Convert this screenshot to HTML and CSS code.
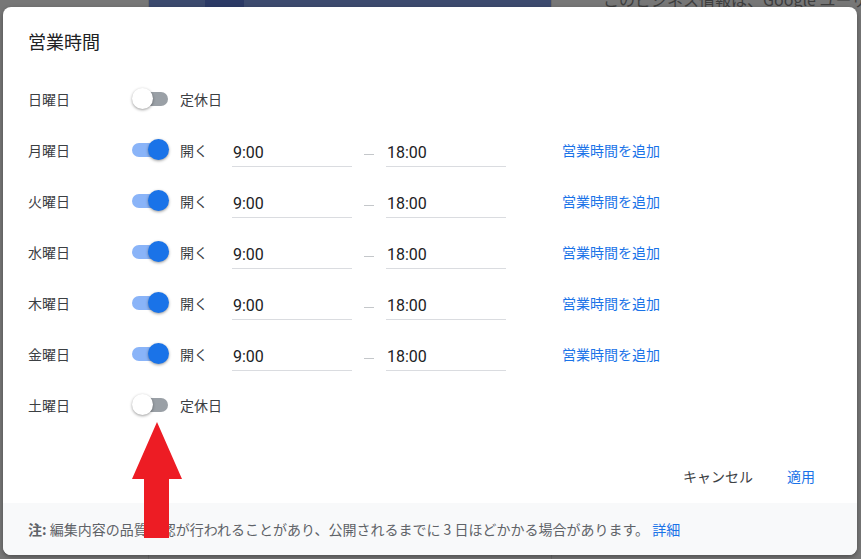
FILE: index.html
```html
<!DOCTYPE html>
<html lang="ja">
<head>
<meta charset="utf-8">
<title>営業時間</title>
<link rel="stylesheet" href="styles.css">
</head>
<body>
<div class="backdrop">
  <div class="bg-col"><span class="bg-seg-a"></span><span class="bg-seg-b"></span><span class="bg-seg-c"></span></div>
  <div class="bg-text">このビジネス情報は、Google ユーザ</div>
</div>

<div class="dialog">
  <h2 class="title">営業時間</h2>
  <div class="days">
    <div class="day">
      <span class="day-name">日曜日</span>
      <span class="switch"><span class="track"></span><span class="thumb"></span></span>
      <span class="state">定休日</span>
    </div>
    <div class="day">
      <span class="day-name">月曜日</span>
      <span class="switch on"><span class="track"></span><span class="thumb"></span></span>
      <span class="state">開く</span>
      <span class="time">9:00</span><span class="dash"><span></span></span><span class="time">18:00</span>
      <a class="add-link">営業時間を追加</a>
    </div>
    <div class="day">
      <span class="day-name">火曜日</span>
      <span class="switch on"><span class="track"></span><span class="thumb"></span></span>
      <span class="state">開く</span>
      <span class="time">9:00</span><span class="dash"><span></span></span><span class="time">18:00</span>
      <a class="add-link">営業時間を追加</a>
    </div>
    <div class="day">
      <span class="day-name">水曜日</span>
      <span class="switch on"><span class="track"></span><span class="thumb"></span></span>
      <span class="state">開く</span>
      <span class="time">9:00</span><span class="dash"><span></span></span><span class="time">18:00</span>
      <a class="add-link">営業時間を追加</a>
    </div>
    <div class="day">
      <span class="day-name">木曜日</span>
      <span class="switch on"><span class="track"></span><span class="thumb"></span></span>
      <span class="state">開く</span>
      <span class="time">9:00</span><span class="dash"><span></span></span><span class="time">18:00</span>
      <a class="add-link">営業時間を追加</a>
    </div>
    <div class="day">
      <span class="day-name">金曜日</span>
      <span class="switch on"><span class="track"></span><span class="thumb"></span></span>
      <span class="state">開く</span>
      <span class="time">9:00</span><span class="dash"><span></span></span><span class="time">18:00</span>
      <a class="add-link">営業時間を追加</a>
    </div>
    <div class="day">
      <span class="day-name">土曜日</span>
      <span class="switch"><span class="track"></span><span class="thumb"></span></span>
      <span class="state">定休日</span>
    </div>
  </div>
  <div class="actions">
    <button class="btn">キャンセル</button>
    <button class="btn primary">適用</button>
  </div>
  <div class="note"><b>注:</b>&nbsp;編集内容の品質確認が行われることがあり、公開されるまでに 3 日ほどかかる場合があります。 <a class="note-link">詳細</a></div>
</div>

<svg class="arrow" width="52" height="118" viewBox="0 0 52 118">
  <polygon points="25,0 50,57 37,57 37,116 12,116 12,57 0,57" fill="#ed1c24"/>
</svg>
</body>
</html>
```

FILE: styles.css
```css
* { box-sizing: border-box; }
html, body {
  margin: 0;
  padding: 0;
  width: 861px;
  height: 559px;
  overflow: hidden;
}
body {
  background: #777777;
  font-family: Roboto, "Noto Sans CJK JP", sans-serif;
  position: relative;
  padding: 7px 0 0 3px;
}
.backdrop {
  position: absolute;
  left: 0;
  top: 0;
  width: 861px;
  height: 559px;
}
.bg-col {
  position: absolute;
  left: 148px;
  top: 0;
  width: 404px;
  height: 559px;
  border-left: 1px solid #6a6a6a;
  border-right: 1px solid #6a6a6a;
  display: flex;
  align-items: flex-start;
}
.bg-col span { height: 7px; display: block; }
.bg-seg-a { width: 56px; background: #3c4a6e; }
.bg-seg-b { width: 39px; background: #2c3a66; }
.bg-seg-c { flex: 1; background: #3d4b6f; }
.bg-text {
  position: absolute;
  left: 603px;
  top: -12px;
  font-family: "Noto Sans CJK JP", sans-serif;
  font-size: 16px;
  line-height: 22px;
  color: #3e3e3e;
  white-space: nowrap;
}
.dialog {
  position: relative;
  width: 854px;
  height: 548px;
  background: #ffffff;
  border-radius: 8px;
  overflow: hidden;
  display: flex;
  flex-direction: column;
  box-shadow: 0 2px 5px rgba(0, 0, 0, 0.35);
}
.title {
  margin: 0;
  padding: 22px 0 0 25px;
  height: 55px;
  font-family: "Noto Sans CJK JP", sans-serif;
  font-size: 18px;
  line-height: 24px;
  font-weight: 400;
  color: #202124;
}
.days {
  margin-top: 11px;
  display: flex;
  flex-direction: column;
}
.day {
  height: 51px;
  padding-left: 25px;
  display: flex;
  align-items: center;
  font-family: "Noto Sans CJK JP", sans-serif;
  font-size: 14px;
  line-height: 20px;
  color: #3c4043;
}
.day-name { width: 104px; }
.switch {
  position: relative;
  width: 37px;
  height: 22px;
  margin-right: 11px;
}
.track {
  position: absolute;
  left: 2px;
  top: 4px;
  width: 34px;
  height: 14px;
  border-radius: 7px;
  background: #9aa0a6;
}
.thumb {
  position: absolute;
  left: 0;
  top: 0;
  width: 21px;
  height: 21px;
  border-radius: 50%;
  background: #ffffff;
  box-shadow: 0 1px 3px rgba(0, 0, 0, 0.4);
}
.switch.on .track { background: #8ab4f8; left: 0; width: 33px; }
.switch.on .thumb { left: 16px; background: #1a73e8; }
.state { width: 52px; }
.time {
  width: 120px;
  height: 32px;
  margin-top: 2px;
  border-bottom: 1px solid #dadce0;
  font-family: Roboto, sans-serif;
  font-size: 16px;
  line-height: 31px;
  padding-top: 2px;
  color: #202124;
  padding-left: 1px;
}
.dash {
  width: 34px;
  height: 32px;
  display: flex;
  justify-content: center;
  align-items: center;
  padding-top: 10px;
}
.dash span {
  display: block;
  width: 10px;
  height: 1px;
  background: #c4c7ca;
}
.add-link {
  margin-left: 56px;
  color: #1a73e8;
  cursor: pointer;
}
.actions {
  margin-top: auto;
  margin-bottom: 9px;
  padding-right: 34px;
  display: flex;
  justify-content: flex-end;
  gap: 18px;
  height: 36px;
}
.btn {
  border: none;
  background: transparent;
  padding: 0 8px;
  height: 36px;
  font-family: "Noto Sans CJK JP", sans-serif;
  font-size: 14px;
  line-height: 20px;
  color: #3c4043;
  cursor: pointer;
}
.btn.primary { color: #1a73e8; }
.note {
  height: 52px;
  flex-shrink: 0;
  background: #f8f9fa;
  padding-left: 25px;
  display: flex;
  align-items: center;
  font-family: "Noto Sans CJK JP", sans-serif;
  font-size: 14px;
  line-height: 20px;
  color: #5f6368;
  white-space: pre;
}
.note b { font-weight: 700; }
.note-link { color: #1a73e8; cursor: pointer; }
.arrow {
  position: absolute;
  left: 132px;
  top: 422px;
}
```
